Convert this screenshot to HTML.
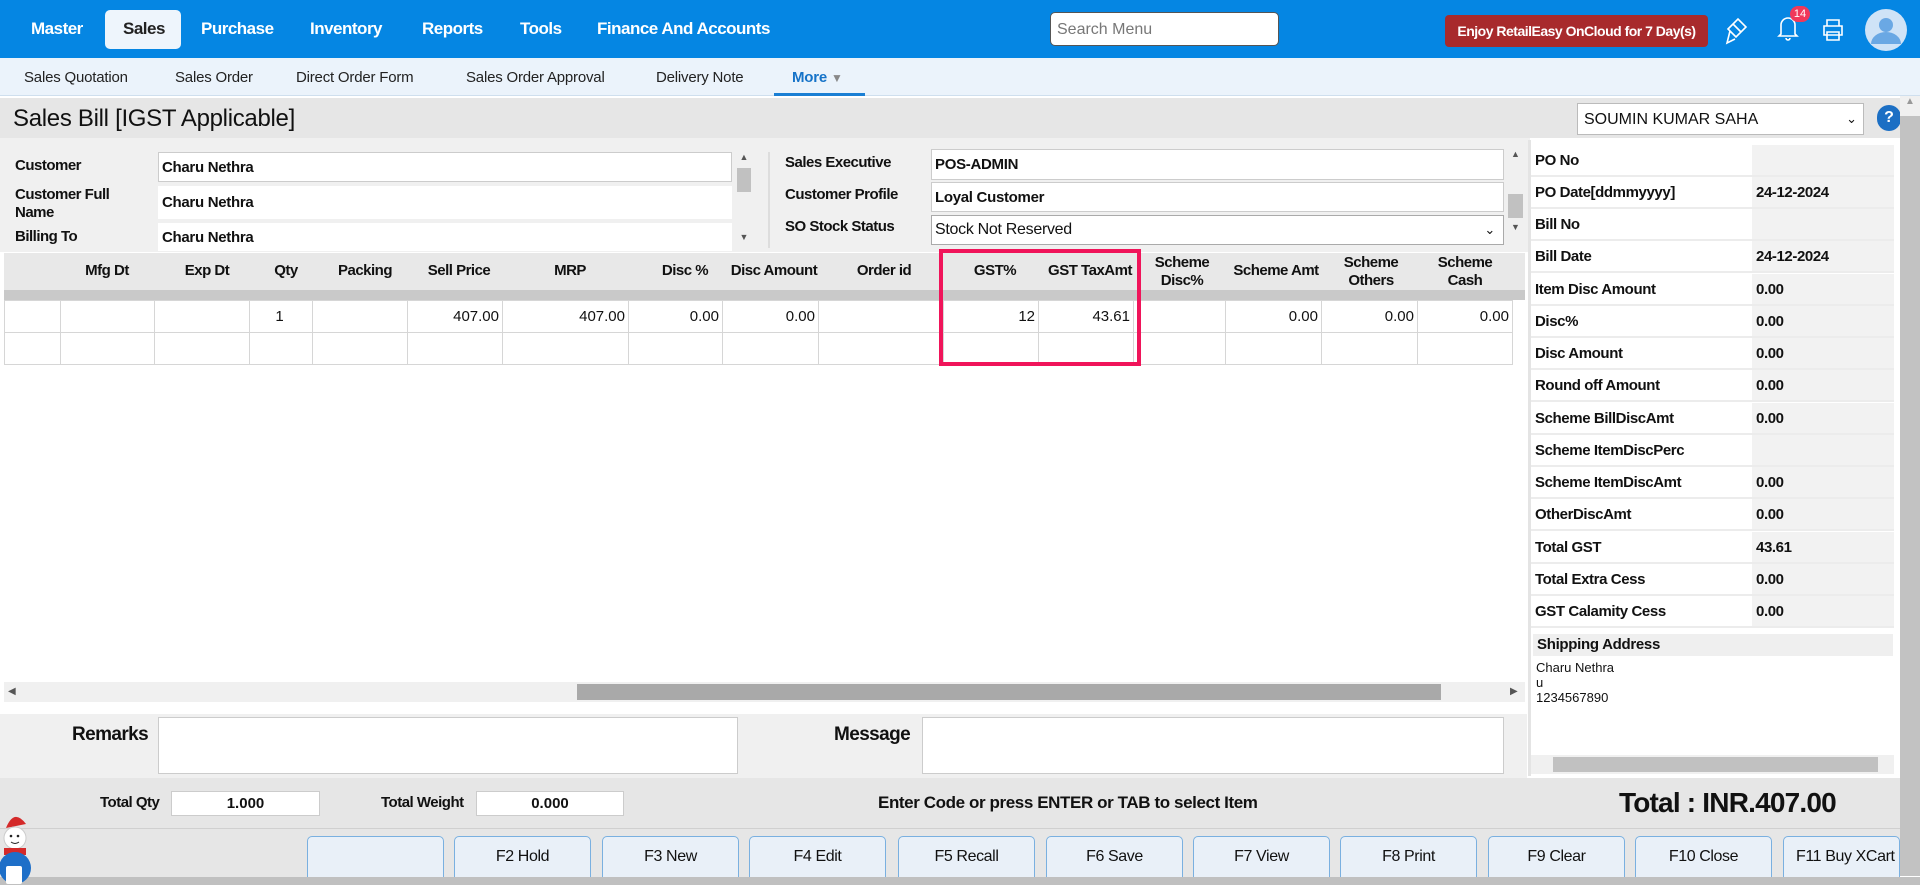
<!DOCTYPE html>
<html><head><meta charset="utf-8"><style>
*{box-sizing:border-box;margin:0;padding:0}
body{width:1920px;height:885px;overflow:hidden;background:#fff;font-family:"Liberation Sans",sans-serif;color:#111;position:relative}
.a{position:absolute}
.top{left:0;top:0;width:1920px;height:58px;background:#0586e3}
.nav{color:#fff;font-weight:bold;font-size:17px;top:19px;letter-spacing:-0.5px}
.sub{left:0;top:58px;width:1920px;height:38px;background:#ebf3fb;border-bottom:1px solid #cfdfee}
.subi{top:69px;font-size:15px;color:#222;letter-spacing:-0.2px}
.lbl{font-size:15px;font-weight:bold;letter-spacing:-0.5px}
.inp{background:#fff;border:1px solid #ccc;font-size:15px;font-weight:bold;padding-left:3px;display:flex;align-items:center;letter-spacing:-0.3px}
table{border-collapse:collapse;position:absolute}
td{border:1px solid #d6d6d6;font-size:15px;height:32px;text-align:right;padding-right:3px}
.rp{left:1531px;width:363px;height:32px;display:flex;letter-spacing:-0.4px}
.rp .l{width:221px;background:#fff;font-weight:bold;font-size:15px;padding-left:4px;display:flex;align-items:center;border-bottom:2px solid #ececec}
.rp .v{flex:1;background:#f2f2f2;font-weight:bold;font-size:15px;padding-left:4px;display:flex;align-items:center;border-bottom:2px solid #ececec}
.btn{top:836px;width:137px;height:45px;background:#e9f0f8;border:1px solid #7ab0e0;border-radius:5px 5px 0 0;font-size:16px;text-align:center;padding-top:11px;letter-spacing:-0.4px}
.hd{font-size:15px;font-weight:bold;text-align:center;letter-spacing:-0.5px}
</style></head><body>
<div class="a top"></div>
<div class="a" style="left:105px;top:10px;width:76px;height:39px;background:#eef5fc;border-radius:5px"></div>
<div class="a nav" style="left:31px">Master</div>
<div class="a nav" style="left:123px;color:#222">Sales</div>
<div class="a nav" style="left:201px">Purchase</div>
<div class="a nav" style="left:310px">Inventory</div>
<div class="a nav" style="left:422px">Reports</div>
<div class="a nav" style="left:520px">Tools</div>
<div class="a nav" style="left:597px">Finance And Accounts</div>
<div class="a" style="left:1050px;top:12px;width:229px;height:34px;background:#fff;border:1px solid #555;border-radius:5px;font-size:16px;color:#777;padding:8px 6px">Search Menu</div>
<div class="a" style="left:1445px;top:15px;width:263px;height:32px;background:#a82a2c;border-radius:4px;color:#fff;font-weight:bold;font-size:14px;text-align:center;padding-top:8px;letter-spacing:-0.5px">Enjoy RetailEasy OnCloud for 7 Day(s)</div>
<svg class="a" style="left:1724px;top:15px" width="26" height="30" viewBox="0 0 26 30" fill="none" stroke="#fff" stroke-width="1.6"><path d="M4 14l10-10 8 8-10 10z M9 9l8 8 M6 16l-3 12 8-4"/></svg>
<svg class="a" style="left:1776px;top:14px" width="24" height="28" viewBox="0 0 24 28" fill="none" stroke="#fff" stroke-width="1.6"><path d="M5 20V11a7 7 0 0114 0v9l2 2H3z M10 24a2 2 0 004 0"/></svg>
<div class="a" style="left:1790px;top:6px;width:20px;height:16px;background:#f0385a;border-radius:8px;color:#fff;font-size:11px;text-align:center;line-height:16px">14</div>
<svg class="a" style="left:1821px;top:17px" width="24" height="26" viewBox="0 0 24 26" fill="none" stroke="#fff" stroke-width="1.6"><path d="M6 9V3h12v6 M3 9h18v9H3z M6 15h12v8H6z"/></svg>
<svg class="a" style="left:1865px;top:9px" width="42" height="42" viewBox="0 0 42 42"><circle cx="21" cy="21" r="21" fill="#cfe3f7"/><circle cx="21" cy="16" r="7" fill="#6aa8e4"/><path d="M6 35a15 12 0 0130 0z" fill="#6aa8e4"/></svg>

<div class="a sub"></div>
<div class="a subi" style="left:24px">Sales Quotation</div>
<div class="a subi" style="left:175px">Sales Order</div>
<div class="a subi" style="left:296px">Direct Order Form</div>
<div class="a subi" style="left:466px">Sales Order Approval</div>
<div class="a subi" style="left:656px">Delivery Note</div>
<div class="a subi" style="left:792px;color:#1673c8;font-weight:bold">More <span style="color:#888;font-size:12px">▼</span></div>
<div class="a" style="left:774px;top:93px;width:91px;height:3px;background:#1a7fd4"></div>

<div class="a" style="left:0;top:98px;width:1900px;height:40px;background:#e6e6e6"></div>
<div class="a" style="left:13px;top:105px;font-size:24px;letter-spacing:-0.3px">Sales Bill [IGST Applicable]</div>
<div class="a" style="left:1577px;top:103px;width:287px;height:32px;background:#fff;border:1px solid #bbb;font-size:16px;padding:7px 6px">SOUMIN KUMAR SAHA<span style="float:right;font-size:13px">&#8964;</span></div>
<div class="a" style="left:1877px;top:105px;width:24px;height:26px;background:#1c6fc4;border-radius:13px;color:#fff;font-weight:bold;text-align:center;padding-top:4px">?</div>
<div class="a" style="left:1900px;top:96px;width:20px;height:780px;background:#c2c2c2"></div>
<div class="a" style="left:1900px;top:96px;width:20px;height:20px;background:#f0f0f0;font-size:10px;color:#999;text-align:center">▲</div>

<div class="a" style="left:0;top:138px;width:1530px;height:114px;background:#f0f0f0"></div>
<div class="a lbl" style="left:15px;top:157px">Customer</div>
<div class="a lbl" style="left:15px;top:186px;line-height:18px">Customer Full<br>Name</div>
<div class="a lbl" style="left:15px;top:228px">Billing To</div>
<div class="a inp" style="left:158px;top:152px;width:574px;height:30px">Charu Nethra</div>
<div class="a inp" style="left:158px;top:186px;width:574px;height:33px;border-color:#fff">Charu Nethra</div>
<div class="a inp" style="left:158px;top:223px;width:574px;height:28px;border-color:#fff">Charu Nethra</div>
<div class="a" style="left:735px;top:152px;width:18px;height:99px;background:#f0f0f0;font-size:9px;color:#555;text-align:center">▲<div style="background:#c1c1c1;height:24px;margin:6px 2px"></div><div style="margin-top:40px">▼</div></div>
<div class="a" style="left:768px;top:152px;width:2px;height:96px;background:#ddd"></div>
<div class="a lbl" style="left:785px;top:154px">Sales Executive</div>
<div class="a lbl" style="left:785px;top:186px">Customer Profile</div>
<div class="a lbl" style="left:785px;top:218px">SO Stock Status</div>
<div class="a inp" style="left:931px;top:149px;width:573px;height:31px">POS-ADMIN</div>
<div class="a inp" style="left:931px;top:182px;width:573px;height:30px">Loyal Customer</div>
<div class="a inp" style="left:931px;top:215px;width:573px;height:30px;font-weight:normal;font-size:16px;border-color:#aaa">Stock Not Reserved<span style="margin-left:auto;margin-right:8px;font-size:13px">&#8964;</span></div>
<div class="a" style="left:1506px;top:149px;width:19px;height:96px;background:#f0f0f0;font-size:9px;color:#555;text-align:center">▲<div style="background:#c1c1c1;height:24px;margin:35px 2px 4px"></div>▼</div>

<div class="a" style="left:4px;top:253px;width:1521px;height:37px;background:#e8e8e8"></div>
<div class="a" style="left:4px;top:290px;width:1521px;height:10px;background:#c9c9c9"></div>
<div class="a hd" style="left:60px;top:262px;width:94px">Mfg Dt</div>
<div class="a hd" style="left:160px;top:262px;width:94px">Exp Dt</div>
<div class="a hd" style="left:256px;top:262px;width:60px">Qty</div>
<div class="a hd" style="left:318px;top:262px;width:94px">Packing</div>
<div class="a hd" style="left:412px;top:262px;width:94px">Sell Price</div>
<div class="a hd" style="left:508px;top:262px;width:124px">MRP</div>
<div class="a hd" style="left:640px;top:262px;width:90px">Disc %</div>
<div class="a hd" style="left:726px;top:262px;width:96px">Disc Amount</div>
<div class="a hd" style="left:822px;top:262px;width:124px">Order id</div>
<div class="a hd" style="left:948px;top:262px;width:94px">GST%</div>
<div class="a hd" style="left:1042px;top:262px;width:96px">GST TaxAmt</div>
<div class="a hd" style="left:1138px;top:254px;width:88px;line-height:18px">Scheme<br>Disc%</div>
<div class="a hd" style="left:1228px;top:262px;width:96px">Scheme Amt</div>
<div class="a hd" style="left:1324px;top:254px;width:94px;line-height:18px">Scheme<br>Others</div>
<div class="a hd" style="left:1418px;top:254px;width:94px;line-height:18px">Scheme<br>Cash</div>
<table style="left:4px;top:300px">
<tr><td style="width:56px"></td><td style="width:94px"></td><td style="width:95px"></td><td style="width:63px;text-align:center">1</td><td style="width:95px"></td><td style="width:95px">407.00</td><td style="width:126px">407.00</td><td style="width:94px">0.00</td><td style="width:96px">0.00</td><td style="width:125px"></td><td style="width:95px">12</td><td style="width:95px">43.61</td><td style="width:92px"></td><td style="width:96px">0.00</td><td style="width:96px">0.00</td><td style="width:95px">0.00</td></tr>
<tr><td></td><td></td><td></td><td></td><td></td><td></td><td></td><td></td><td></td><td></td><td></td><td></td><td></td><td></td><td></td><td></td></tr>
</table>
<div class="a" style="left:939px;top:249px;width:202px;height:117px;border:4px solid #f0145a"></div>
<div class="a" style="left:4px;top:682px;width:1521px;height:20px;background:#f0f0f0"></div>
<div class="a" style="left:577px;top:684px;width:864px;height:16px;background:#a9a9a9"></div>
<div class="a" style="left:8px;top:686px;font-size:10px;color:#555">◀</div>
<div class="a" style="left:1510px;top:686px;font-size:10px;color:#555">▶</div>

<div class="a" style="left:1528px;top:140px;width:3px;height:636px;background:#e4e4e4"></div>
<div class="a rp" style="top:145px"><div class="l">PO No</div><div class="v"></div></div>
<div class="a rp" style="top:177px"><div class="l">PO Date[ddmmyyyy]</div><div class="v">24-12-2024</div></div>
<div class="a rp" style="top:209px"><div class="l">Bill No</div><div class="v"></div></div>
<div class="a rp" style="top:241px"><div class="l">Bill Date</div><div class="v">24-12-2024</div></div>
<div class="a rp" style="top:274px"><div class="l">Item Disc Amount</div><div class="v">0.00</div></div>
<div class="a rp" style="top:306px"><div class="l">Disc%</div><div class="v">0.00</div></div>
<div class="a rp" style="top:338px"><div class="l">Disc Amount</div><div class="v">0.00</div></div>
<div class="a rp" style="top:370px"><div class="l">Round off Amount</div><div class="v">0.00</div></div>
<div class="a rp" style="top:403px"><div class="l">Scheme BillDiscAmt</div><div class="v">0.00</div></div>
<div class="a rp" style="top:435px"><div class="l">Scheme ItemDiscPerc</div><div class="v"></div></div>
<div class="a rp" style="top:467px"><div class="l">Scheme ItemDiscAmt</div><div class="v">0.00</div></div>
<div class="a rp" style="top:499px"><div class="l">OtherDiscAmt</div><div class="v">0.00</div></div>
<div class="a rp" style="top:532px"><div class="l">Total GST</div><div class="v">43.61</div></div>
<div class="a rp" style="top:564px"><div class="l">Total Extra Cess</div><div class="v">0.00</div></div>
<div class="a rp" style="top:596px"><div class="l">GST Calamity Cess</div><div class="v">0.00</div></div>
<div class="a" style="left:1533px;top:634px;width:360px;height:22px;background:#efefef;font-weight:bold;font-size:15px;padding:2px 4px;letter-spacing:-0.3px">Shipping Address</div>
<div class="a" style="left:1536px;top:660px;font-size:13px;line-height:15px">Charu Nethra<br>u<br>1234567890</div>
<div class="a" style="left:1531px;top:755px;width:363px;height:19px;background:#f0f0f0"></div>
<div class="a" style="left:1553px;top:757px;width:325px;height:15px;background:#c1c1c1"></div>

<div class="a" style="left:0;top:714px;width:1527px;height:64px;background:#f0f0f0"></div>
<div class="a" style="left:72px;top:724px;font-size:19px;font-weight:bold;letter-spacing:-0.6px">Remarks</div>
<div class="a" style="left:158px;top:717px;width:580px;height:57px;background:#fff;border:1px solid #ccc"></div>
<div class="a" style="left:834px;top:724px;font-size:19px;font-weight:bold;letter-spacing:-0.6px">Message</div>
<div class="a" style="left:922px;top:717px;width:582px;height:57px;background:#fff;border:1px solid #ccc"></div>

<div class="a" style="left:0;top:778px;width:1900px;height:99px;background:#e6e6e6"></div>
<div class="a" style="left:0;top:828px;width:1900px;height:1px;background:#d0d0d0"></div>
<div class="a" style="left:100px;top:794px;font-size:15px;font-weight:bold;letter-spacing:-0.5px">Total Qty</div>
<div class="a" style="left:171px;top:791px;width:149px;height:25px;background:#fff;border:1px solid #ccc;text-align:center;font-size:15px;font-weight:bold;padding-top:3px">1.000</div>
<div class="a" style="left:381px;top:794px;font-size:15px;font-weight:bold;letter-spacing:-0.5px">Total Weight</div>
<div class="a" style="left:476px;top:791px;width:148px;height:25px;background:#fff;border:1px solid #ccc;text-align:center;font-size:15px;font-weight:bold;padding-top:3px">0.000</div>
<div class="a" style="left:878px;top:793px;font-size:17px;font-weight:bold;letter-spacing:-0.4px">Enter Code or press ENTER or TAB to select Item</div>
<div class="a" style="left:1619px;top:787px;font-size:28px;font-weight:bold;letter-spacing:-0.8px">Total : INR.407.00</div>

<div class="a btn" style="left:307px"></div>
<div class="a btn" style="left:454px">F2 Hold</div>
<div class="a btn" style="left:602px">F3 New</div>
<div class="a btn" style="left:749px">F4 Edit</div>
<div class="a btn" style="left:898px">F5 Recall</div>
<div class="a btn" style="left:1046px">F6 Save</div>
<div class="a btn" style="left:1193px">F7 View</div>
<div class="a btn" style="left:1340px">F8 Print</div>
<div class="a btn" style="left:1488px">F9 Clear</div>
<div class="a btn" style="left:1635px">F10 Close</div>
<div class="a btn" style="left:1783px;width:117px;overflow:hidden;white-space:nowrap;text-align:left;padding-left:12px">F11 Buy XCart</div>
<div class="a" style="left:0;top:877px;width:1920px;height:8px;background:#c0c0c0"></div>

<svg class="a" style="left:0;top:806px" width="36" height="79" viewBox="0 0 36 79"><path d="M6 22 Q14 2 26 18 Z" fill="#d42a2a"/><circle cx="15" cy="32" r="11" fill="#fff" stroke="#ccc"/><circle cx="11" cy="30" r="1.3" fill="#222"/><circle cx="18" cy="30" r="1.3" fill="#222"/><path d="M11 36q4 3 8 0" stroke="#222" fill="none"/><rect x="4" y="42" width="22" height="7" fill="#d42a2a"/><circle cx="15" cy="62" r="16" fill="#1e6fc8"/><rect x="6" y="60" width="16" height="18" rx="2" fill="#fff"/></svg>
</body></html>
